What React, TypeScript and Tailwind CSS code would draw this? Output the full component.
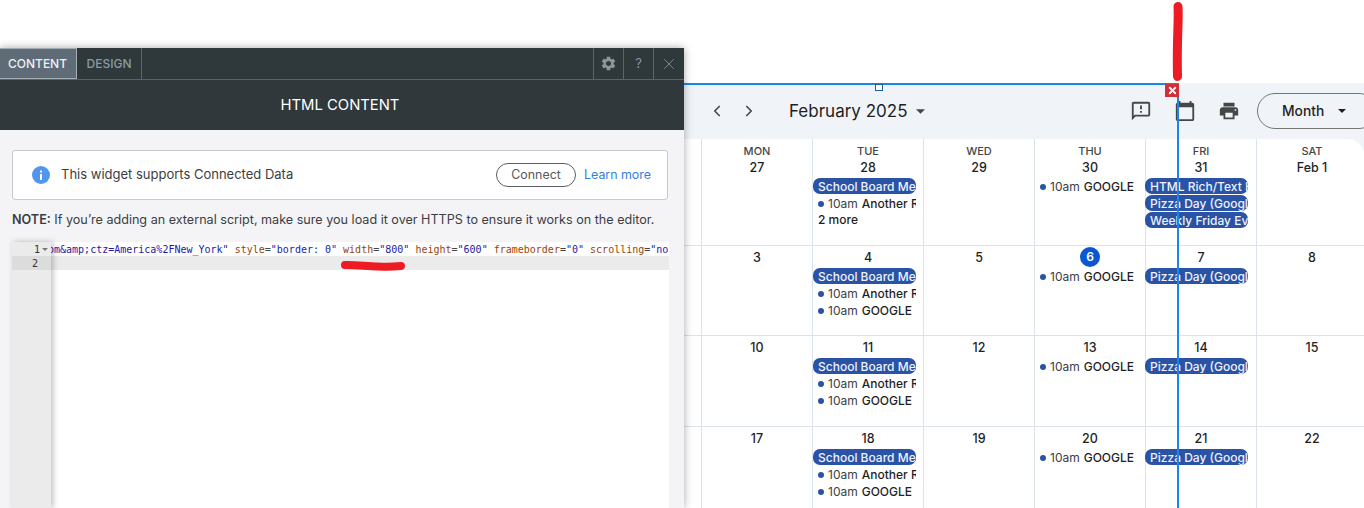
import React from "react";
import { ChevronLeft, ChevronRight, X } from "lucide-react";

type CalEvent = { kind: "pill" | "dot" | "more"; title: string };

interface DayCell {
  label?: string;
  day: string;
  today?: boolean;
  events?: CalEvent[];
}

const school: CalEvent = { kind: "pill", title: "School Board Meeting" };
const another: CalEvent = { kind: "dot", title: "Another Rich Text" };
const google: CalEvent = { kind: "dot", title: "GOOGLE" };
const pizza: CalEvent = { kind: "pill", title: "Pizza Day (Google Sheets)" };

const weeks: DayCell[][] = [
  [
    { day: "" },
    { label: "MON", day: "27" },
    { label: "TUE", day: "28", events: [school, another, { kind: "more", title: "2 more" }] },
    { label: "WED", day: "29" },
    { label: "THU", day: "30", events: [google] },
    {
      label: "FRI",
      day: "31",
      events: [
        { kind: "pill", title: "HTML Rich/Text Event" },
        pizza,
        { kind: "pill", title: "Weekly Friday Event" },
      ],
    },
    { label: "SAT", day: "Feb 1" },
  ],
  [
    { day: "" },
    { day: "3" },
    { day: "4", events: [school, another, google] },
    { day: "5" },
    { day: "6", today: true, events: [google] },
    { day: "7", events: [pizza] },
    { day: "8" },
  ],
  [
    { day: "" },
    { day: "10" },
    { day: "11", events: [school, another, google] },
    { day: "12" },
    { day: "13", events: [google] },
    { day: "14", events: [pizza] },
    { day: "15" },
  ],
  [
    { day: "" },
    { day: "17" },
    { day: "18", events: [school, another, google] },
    { day: "19" },
    { day: "20", events: [google] },
    { day: "21", events: [pizza] },
    { day: "22" },
  ],
];

const rowHeights = ["h-[107px]", "h-[90px]", "h-[91px]", "h-[90px]"];

const Event = ({ event, friday }: { event: CalEvent; friday: boolean }) => {
  if (event.kind === "pill") {
    return (
      <div
        className={`h-[16px] w-[103px] mb-px overflow-hidden whitespace-nowrap rounded-[7px] bg-[#2a52a5] pl-[5px] text-[12px] leading-[17px] font-medium text-[#eef2fb] ${
          friday ? "-ml-px" : ""
        }`}
      >
        {event.title}
      </div>
    );
  }
  if (event.kind === "more") {
    return (
      <div className="-mt-px h-[17px] pl-[5px] text-[12px] leading-[17px] font-medium text-[#1f1f1f]">
        {event.title}
      </div>
    );
  }
  return (
    <div className="flex h-[17px] w-[103px] items-center overflow-hidden whitespace-nowrap text-[12px] leading-[17px]">
      <span className="ml-[5px] mr-[5px] h-[6px] w-[6px] shrink-0 rounded-full bg-[#2a52a5]" />
      <span className="-ml-px mr-[4px] text-[#3c4043]">10am</span>
      <span className="shrink-0 font-medium text-[#1f1f1f]">{event.title}</span>
    </div>
  );
};

const Calendar = () => (
  <div className="h-[425px] w-[680px] shrink-0 bg-[#f0f4f9] mt-[83px]">
    {/* toolbar */}
    <div className="flex h-[56px] items-center text-[#444746]">
      <ChevronLeft className="ml-[24px] h-[18px] w-[18px] shrink-0" strokeWidth={2.2} />
      <ChevronRight className="ml-[14px] h-[18px] w-[18px] shrink-0" strokeWidth={2.2} />
      <span className="ml-[31px] w-[118px] shrink-0 whitespace-nowrap pt-px text-[17px] text-[#1f1f1f]">
        February 2025
      </span>
      <svg viewBox="0 0 10 5" className="ml-[9px] h-[5px] w-[9px] shrink-0 fill-[#444746]">
        <path d="M0 0h10L5 5z" />
      </svg>
      <svg viewBox="0 0 24 24" className="ml-[205px] h-[22px] w-[22px] shrink-0 fill-[#444746]">
        <path d="M20 2H4c-1.1 0-1.99.9-1.99 2L2 22l4-4h14c1.1 0 2-.9 2-2V4c0-1.1-.9-2-2-2zm0 14H5.17L4 17.17V4h16v12zM11 12h2v2h-2zm0-6h2v4h-2z" />
      </svg>
      <svg viewBox="0 0 24 24" className="ml-[22px] h-[22px] w-[22px] shrink-0 fill-[#444746]">
        <path d="M20 3h-1V1h-2v2H7V1H5v2H4c-1.1 0-2 .9-2 2v16c0 1.1.9 2 2 2h16c1.1 0 2-.9 2-2V5c0-1.1-.9-2-2-2zm0 18H4V8h16v13z" />
      </svg>
      <svg viewBox="0 0 24 24" className="ml-[22px] h-[22px] w-[22px] shrink-0 fill-[#444746]">
        <path d="M19 8H5c-1.66 0-3 1.34-3 3v6h4v4h12v-4h4v-6c0-1.66-1.34-3-3-3zm-3 11H8v-5h8v5zm3-7c-.55 0-1-.45-1-1s.45-1 1-1 1 .45 1 1-.45 1-1 1zm-1-9H6v4h12V3z" />
      </svg>
      <div className="ml-[17px] flex h-[36px] w-[120px] shrink-0 items-center rounded-full border border-[#747775] pl-[24px]">
        <span className="text-[13.8px] font-medium text-[#1f1f1f]">Month</span>
        <svg viewBox="0 0 10 5" className="ml-[14px] h-[4px] w-[8px] fill-[#1f1f1f]">
          <path d="M0 0h10L5 5z" />
        </svg>
      </div>
    </div>

    {/* month grid */}
    <div className="rounded-tr-2xl bg-white w-[680px] overflow-hidden">
      {weeks.map((week, w) => (
        <div
          key={w}
          className={`grid grid-cols-[17px_repeat(6,111px)] border-b border-[#dde3ea] ${rowHeights[w]}`}
        >
          {week.map((cell, c) => (
            <div
              key={c}
              className={`flex flex-col ${c > 0 ? "border-l border-[#dde3ea]" : ""} ${
                cell.label ? "pt-[6px]" : "pt-[4px]"
              }`}
            >
              {cell.label && (
                <div className="h-[12px] text-center text-[11px] leading-[12px] font-medium text-[#444746] mb-[3px]">
                  {cell.label}
                </div>
              )}
              {cell.today ? (
                <div className="mx-auto -mt-[3px] mb-px flex h-[20px] w-[20px] items-center justify-center rounded-full bg-[#0b57d0] text-[12px] font-semibold text-white">
                  {cell.day}
                </div>
              ) : (
                <div
                  className={`h-[15px] text-center text-[12.5px] leading-[15px] font-medium text-[#1f1f1f] ${
                    cell.day ? "mb-[3px]" : ""
                  }`}
                >
                  {cell.day}
                </div>
              )}
              {cell.events?.map((event, i) => (
                <Event key={i} event={event} friday={c === 5} />
              ))}
            </div>
          ))}
        </div>
      ))}
    </div>
  </div>
);

const Attr = ({ name, value }: { name: string; value: string }) => (
  <>
    <span className="text-[#994409]">{name}</span>
    <span className="text-[#444]">=</span>
    <span className="text-[#1a1aa6]">"{value}"</span>{" "}
  </>
);

const CodeEditor = () => (
  <div className="mx-[12px] mr-[15px] flex h-[266px] bg-white font-['DejaVu_Sans_Mono',monospace] text-[10px] leading-[14px]">
    <div className="relative z-10 w-[39px] shrink-0 bg-[#ebebeb] text-[#333] shadow-[2px_0_6px_rgba(0,0,0,0.25)]">
      <div className="flex h-[14px] items-center justify-end pr-[3px] pt-px">
        <span>1</span>
        <svg viewBox="0 0 8 4" className="ml-[2px] h-[3px] w-[6px] fill-[#777]">
          <path d="M0 0h8L4 4z" />
        </svg>
      </div>
      <div className="h-[14px] bg-[#dcdcdc] pr-[13px] pt-px text-right">2</div>
    </div>
    <div className="min-w-0 flex-1 overflow-hidden">
      <div className="-ml-[3px] h-[14px] whitespace-pre pt-px">
        <span className="text-[#1a1aa6]">om&amp;amp;ctz=America%2FNew_York"</span>{" "}
        <Attr name="style" value="border: 0" />
        <Attr name="width" value="800" />
        <Attr name="height" value="600" />
        <Attr name="frameborder" value="0" />
        <Attr name="scrolling" value="no" />
      </div>
      <div className="h-[14px] bg-[#ebebeb]" />
    </div>
  </div>
);

const Panel = () => (
  <div className="relative z-20 mt-[48px] h-[460px] w-[684px] shrink-0 bg-[#f4f4f6] shadow-[0_0_8px_rgba(0,0,0,0.35)]">
    {/* tabs */}
    <div className="flex h-[32px] border-b border-[#5b6468] bg-[#2f383b] text-[12px] font-medium">
      <div className="flex w-[77px] items-center justify-center border border-l-0 border-[#a3adb3] bg-[#5f6b76] pr-px text-[#eef1f3]">
        CONTENT
      </div>
      <div className="flex w-[65px] items-center justify-center border-r border-[#5b6468] text-[#8d9a9f]">
        DESIGN
      </div>
      <div className="ml-auto flex w-[30px] items-center justify-center border-l border-[#5b6468]">
        <svg viewBox="0 0 24 24" className="h-[17px] w-[17px] fill-[#8d979b]">
          <path d="M19.14 12.94c.04-.3.06-.61.06-.94 0-.32-.02-.64-.07-.94l2.03-1.58c.18-.14.23-.41.12-.61l-1.92-3.32c-.12-.22-.37-.29-.59-.22l-2.39.96c-.5-.38-1.03-.7-1.62-.94l-.36-2.54c-.04-.24-.24-.41-.48-.41h-3.84c-.24 0-.43.17-.47.41l-.36 2.54c-.59.24-1.13.57-1.62.94l-2.39-.96c-.22-.08-.47 0-.59.22L2.74 8.87c-.12.21-.08.47.12.61l2.03 1.58c-.05.3-.09.63-.09.94s.02.64.07.94l-2.03 1.58c-.18.14-.23.41-.12.61l1.92 3.32c.12.22.37.29.59.22l2.39-.96c.5.38 1.03.7 1.62.94l.36 2.54c.05.24.24.41.48.41h3.84c.24 0 .44-.17.47-.41l.36-2.54c.59-.24 1.13-.56 1.62-.94l2.39.96c.22.08.47 0 .59-.22l1.92-3.32c.12-.22.07-.47-.12-.61l-2.01-1.58zM12 15.6c-1.98 0-3.6-1.62-3.6-3.6s1.62-3.6 3.6-3.6 3.6 1.62 3.6 3.6-1.62 3.6-3.6 3.6z" />
        </svg>
      </div>
      <div className="flex w-[30px] items-center justify-center border-l border-[#5b6468] text-[13px] font-normal text-[#8d979b]">
        ?
      </div>
      <div className="flex w-[31px] items-center justify-center border-l border-[#5b6468]">
        <X className="h-[18px] w-[18px] text-[#8d979b]" strokeWidth={1.1} />
      </div>
    </div>

    {/* title */}
    <div className="flex h-[50px] items-center justify-center bg-[#30383b] pr-[4px] pt-px text-[14.8px] text-white">
      HTML CONTENT
    </div>

    {/* connected data notice */}
    <div className="mx-[12px] mt-[20px] mr-[16px] flex h-[50px] items-center rounded-[3px] border border-[#c9c9cc] bg-white text-[13px] text-[#3b3e44]">
      <svg viewBox="0 0 18 18" className="ml-[19px] h-[18px] w-[18px]">
        <circle cx="9" cy="9" r="9" fill="#4f96ee" />
        <rect x="8" y="8" width="2" height="6" fill="#fff" />
        <rect x="8" y="4.5" width="2" height="2" fill="#fff" />
      </svg>
      <span className="-mt-px ml-[11px]">This widget supports Connected Data</span>
      <div className="ml-auto flex h-[24px] w-[80px] items-center justify-center rounded-full border border-[#5c5f66] text-[12.4px] text-[#55585f]">
        Connect
      </div>
      <span className="ml-[8px] mr-[16px] text-[12.4px] text-[#2f7fe0]">Learn more</span>
    </div>

    <p className="mx-[12px] mt-[11px] mb-[13px] h-[18px] text-[12.6px] leading-[18px] whitespace-nowrap text-[#3b3e44]">
      <span className="font-semibold">NOTE:</span> If you’re adding an external script, make sure you load it over
      HTTPS to ensure it works on the editor.
    </p>

    <CodeEditor />
  </div>
);

const Overlay = () => (
  <>
    {/* widget selection frame */}
    <div className="absolute left-[684px] top-[83px] z-10 h-[2px] w-[495px] bg-[#1a86ea]" />
    <div className="absolute left-[1177px] top-[84px] z-10 h-[424px] w-[2px] bg-[#1a86ea]" />
    <div className="absolute left-[875px] top-[84px] z-10 h-[7px] w-[8px] border border-[#1a5f9e] bg-white" />
    <div className="absolute left-[1165px] top-[84px] z-10 flex h-[13px] w-[14px] items-center justify-center bg-[#d0303a]">
      <X className="h-[11px] w-[11px] text-white" strokeWidth={4} />
    </div>
    {/* red marker annotations */}
    <svg className="absolute left-0 top-0 z-30 h-[508px] w-[1364px]" viewBox="0 0 1364 508" fill="none">
      <path
        d="M1178 6.5C1179 20 1176.5 40 1177.5 76.5"
        stroke="#ed1c24"
        strokeWidth="9"
        strokeLinecap="round"
      />
      <path
        d="M345 265C355 264.5 368 266.5 378 266.5C388 267 396 266.5 401 266"
        stroke="#ed1c24"
        strokeWidth="8"
        strokeLinecap="round"
      />
    </svg>
  </>
);

const App: React.FC = () => {
  return (
    <div className="relative flex h-[508px] w-[1364px] overflow-hidden bg-white font-['Inter',sans-serif]">
      <Panel />
      <Calendar />
      <Overlay />
    </div>
  );
};

export default App;
